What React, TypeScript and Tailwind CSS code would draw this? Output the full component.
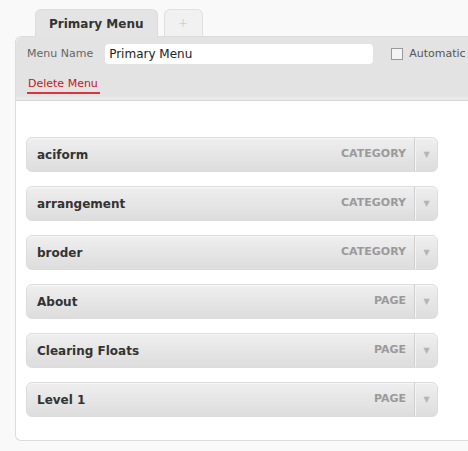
const items = [
  { title: "aciform", type: "Category" },
  { title: "arrangement", type: "Category" },
  { title: "broder", type: "Category" },
  { title: "About", type: "Page" },
  { title: "Clearing Floats", type: "Page" },
  { title: "Level 1", type: "Page" },
];

function MenuItem({ title, type }: { title: string; type: string }) {
  return (
    <li className="flex h-[35px] items-center rounded-[6px] border border-[#dcdcdc] bg-gradient-to-b from-[#efefef] to-[#dddddd] shadow-[inset_0_1px_0_#f7f7f7]">
      <span className="flex-1 pl-[10px] pt-px text-[12px] font-bold text-[#333]">{title}</span>
      <span className="pr-[8px] text-[11px] font-bold uppercase text-[#9a9a9a]">{type}</span>
      <span className="h-full w-px bg-[#cfcfcf] shadow-[1px_0_0_#f5f5f5]" />
      <span className="flex w-[22px] justify-center pl-px text-[8px] text-[#b5b5b5]">▼</span>
    </li>
  );
}

export default function App() {
  return (
    <div className="min-h-[451px] w-[468px] overflow-hidden bg-[#f9f9f9] pt-[9px] pl-[15px] font-['DejaVu_Sans',sans-serif]">
      <div className="flex items-end pl-[20px]">
        <div className="relative z-10 -mb-px flex h-[28px] items-center rounded-t-[6px] border border-b-0 border-[#dcdcdc] bg-[#e4e4e4] px-[13px] pt-px text-[12px] font-bold text-[#333]">
          Primary Menu
        </div>
        <div className="ml-[6px] flex h-[27px] w-[39px] items-center justify-center rounded-t-[6px] border border-b-0 border-[#e0e0e0] bg-[#f1f1f1] text-[12px] font-light text-[#c4c4c4]">
          +
        </div>
      </div>
      <div className="w-[480px] rounded-tl-[6px] rounded-bl-[6px] border border-r-0 border-[#dcdcdc] bg-white">
        <div className="h-[64px] rounded-tl-[6px] border-b border-[#d6d6d6] bg-[#e3e3e3] pl-[11px] pt-[7px] shadow-[inset_0_-3px_0_#e9e9e9]">
          <div className="flex items-center">
            <label className="text-[11px] text-[#666]">Menu Name</label>
            <div className="ml-[12px] flex h-[20px] w-[268px] items-center rounded-[4px] bg-white pl-[4px] text-[12px] text-[#222]">
              Primary Menu
            </div>
            <span className="ml-[18px] h-[12px] w-[12px] border border-[#9a9a9a] bg-[#f4f4f4]" />
            <span className="ml-[6px] whitespace-nowrap text-[11px] text-[#555]">Automatic</span>
          </div>
          <div className="mt-[13px] inline-block border-b-2 border-[#d3373f] pb-[1px] pl-px pr-[2px] text-[11px] leading-[14px] text-[#c4161c]">
            Delete Menu
          </div>
        </div>
        <ul className="flex w-[412px] flex-col gap-[14px] pl-[10px] pt-[36px] pb-[23px] box-content">
          {items.map((item) => (
            <MenuItem key={item.title} title={item.title} type={item.type} />
          ))}
        </ul>
      </div>
    </div>
  );
}
